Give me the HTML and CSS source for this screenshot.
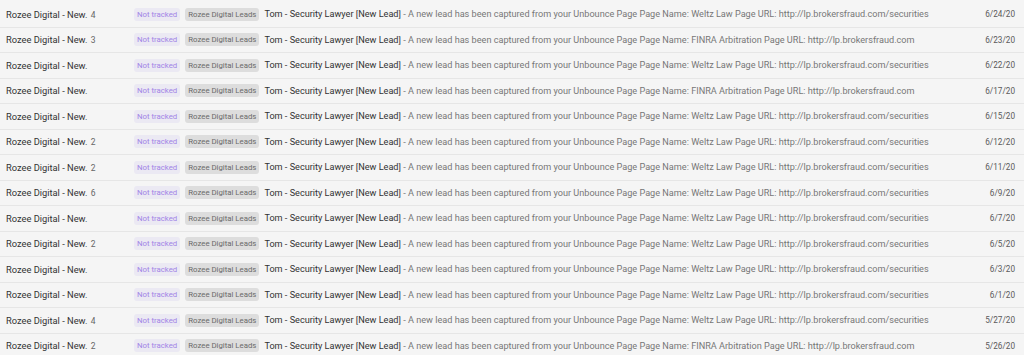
FILE: index.html
```html
<!DOCTYPE html>
<html lang="en">
<head>
    <meta charset="UTF-8">
    <title>Inbox</title>
    <link rel="stylesheet" href="styles.css">
</head>
<body>
    <div class="inbox">
        <div class="row"><div class="sender">Rozee Digital - New. <span class="count">4</span></div><span class="tag tag-track">Not tracked</span><span class="tag tag-label">Rozee Digital Leads</span><div class="text"><span class="subject">Tom - Security Lawyer [New Lead]</span><span class="snippet"> - A new lead has been captured from your Unbounce Page Page Name: Weltz Law Page URL: http://lp.brokersfraud.com/securities</span></div><div class="date">6/24/20</div></div>
        <div class="row"><div class="sender">Rozee Digital - New. <span class="count">3</span></div><span class="tag tag-track">Not tracked</span><span class="tag tag-label">Rozee Digital Leads</span><div class="text"><span class="subject">Tom - Security Lawyer [New Lead]</span><span class="snippet"> - A new lead has been captured from your Unbounce Page Page Name: FINRA Arbitration Page URL: http://lp.brokersfraud.com</span></div><div class="date">6/23/20</div></div>
        <div class="row"><div class="sender">Rozee Digital - New.</div><span class="tag tag-track">Not tracked</span><span class="tag tag-label">Rozee Digital Leads</span><div class="text"><span class="subject">Tom - Security Lawyer [New Lead]</span><span class="snippet"> - A new lead has been captured from your Unbounce Page Page Name: Weltz Law Page URL: http://lp.brokersfraud.com/securities</span></div><div class="date">6/22/20</div></div>
        <div class="row"><div class="sender">Rozee Digital - New.</div><span class="tag tag-track">Not tracked</span><span class="tag tag-label">Rozee Digital Leads</span><div class="text"><span class="subject">Tom - Security Lawyer [New Lead]</span><span class="snippet"> - A new lead has been captured from your Unbounce Page Page Name: FINRA Arbitration Page URL: http://lp.brokersfraud.com</span></div><div class="date">6/17/20</div></div>
        <div class="row"><div class="sender">Rozee Digital - New.</div><span class="tag tag-track">Not tracked</span><span class="tag tag-label">Rozee Digital Leads</span><div class="text"><span class="subject">Tom - Security Lawyer [New Lead]</span><span class="snippet"> - A new lead has been captured from your Unbounce Page Page Name: Weltz Law Page URL: http://lp.brokersfraud.com/securities</span></div><div class="date">6/15/20</div></div>
        <div class="row"><div class="sender">Rozee Digital - New. <span class="count">2</span></div><span class="tag tag-track">Not tracked</span><span class="tag tag-label">Rozee Digital Leads</span><div class="text"><span class="subject">Tom - Security Lawyer [New Lead]</span><span class="snippet"> - A new lead has been captured from your Unbounce Page Page Name: Weltz Law Page URL: http://lp.brokersfraud.com/securities</span></div><div class="date">6/12/20</div></div>
        <div class="row"><div class="sender">Rozee Digital - New. <span class="count">2</span></div><span class="tag tag-track">Not tracked</span><span class="tag tag-label">Rozee Digital Leads</span><div class="text"><span class="subject">Tom - Security Lawyer [New Lead]</span><span class="snippet"> - A new lead has been captured from your Unbounce Page Page Name: Weltz Law Page URL: http://lp.brokersfraud.com/securities</span></div><div class="date">6/11/20</div></div>
        <div class="row"><div class="sender">Rozee Digital - New. <span class="count">6</span></div><span class="tag tag-track">Not tracked</span><span class="tag tag-label">Rozee Digital Leads</span><div class="text"><span class="subject">Tom - Security Lawyer [New Lead]</span><span class="snippet"> - A new lead has been captured from your Unbounce Page Page Name: Weltz Law Page URL: http://lp.brokersfraud.com/securities</span></div><div class="date">6/9/20</div></div>
        <div class="row"><div class="sender">Rozee Digital - New.</div><span class="tag tag-track">Not tracked</span><span class="tag tag-label">Rozee Digital Leads</span><div class="text"><span class="subject">Tom - Security Lawyer [New Lead]</span><span class="snippet"> - A new lead has been captured from your Unbounce Page Page Name: Weltz Law Page URL: http://lp.brokersfraud.com/securities</span></div><div class="date">6/7/20</div></div>
        <div class="row"><div class="sender">Rozee Digital - New. <span class="count">2</span></div><span class="tag tag-track">Not tracked</span><span class="tag tag-label">Rozee Digital Leads</span><div class="text"><span class="subject">Tom - Security Lawyer [New Lead]</span><span class="snippet"> - A new lead has been captured from your Unbounce Page Page Name: Weltz Law Page URL: http://lp.brokersfraud.com/securities</span></div><div class="date">6/5/20</div></div>
        <div class="row"><div class="sender">Rozee Digital - New.</div><span class="tag tag-track">Not tracked</span><span class="tag tag-label">Rozee Digital Leads</span><div class="text"><span class="subject">Tom - Security Lawyer [New Lead]</span><span class="snippet"> - A new lead has been captured from your Unbounce Page Page Name: Weltz Law Page URL: http://lp.brokersfraud.com/securities</span></div><div class="date">6/3/20</div></div>
        <div class="row"><div class="sender">Rozee Digital - New.</div><span class="tag tag-track">Not tracked</span><span class="tag tag-label">Rozee Digital Leads</span><div class="text"><span class="subject">Tom - Security Lawyer [New Lead]</span><span class="snippet"> - A new lead has been captured from your Unbounce Page Page Name: Weltz Law Page URL: http://lp.brokersfraud.com/securities</span></div><div class="date">6/1/20</div></div>
        <div class="row"><div class="sender">Rozee Digital - New. <span class="count">4</span></div><span class="tag tag-track">Not tracked</span><span class="tag tag-label">Rozee Digital Leads</span><div class="text"><span class="subject">Tom - Security Lawyer [New Lead]</span><span class="snippet"> - A new lead has been captured from your Unbounce Page Page Name: Weltz Law Page URL: http://lp.brokersfraud.com/securities</span></div><div class="date">5/27/20</div></div>
        <div class="row"><div class="sender">Rozee Digital - New. <span class="count">2</span></div><span class="tag tag-track">Not tracked</span><span class="tag tag-label">Rozee Digital Leads</span><div class="text"><span class="subject">Tom - Security Lawyer [New Lead]</span><span class="snippet"> - A new lead has been captured from your Unbounce Page Page Name: FINRA Arbitration Page URL: http://lp.brokersfraud.com</span></div><div class="date">5/26/20</div></div>
    </div>
</body>
</html>
```

FILE: styles.css
```css
body {
    margin: 0;
    background-color: #f5f5f5;
    font-family: Roboto, Arial, sans-serif;
    font-size: 9.3px;
    color: #333;
    overflow: hidden;
}
.inbox {
    padding-top: 2px;
}
.row {
    display: flex;
    align-items: center;
    height: 25.5px;
    box-sizing: border-box;
    border-bottom: 1px solid #e6e6e6;
    padding: 0 9px 0 6px;
    white-space: nowrap;
}
.sender {
    width: 128px;
    flex-shrink: 0;
    color: #333;
}
.count {
    color: #666;
    font-size: 8.5px;
    margin-left: 1px;
}
.tag {
    font-size: 7.8px;
    line-height: 13px;
    padding: 0 3px;
    border-radius: 3px;
    margin-right: 5px;
    flex-shrink: 0;
}
.tag-track {
    background-color: #ebe9f3;
    color: #a184e6;
}
.tag-label {
    background-color: #dddddd;
    color: #6a6a6a;
}
.text {
    flex: 1;
    overflow: hidden;
    font-size: 9.15px;
}
.subject {
    color: #333;
}
.snippet {
    color: #777;
}
.date {
    color: #5a5a5a;
    font-size: 8.2px;
    margin-left: 10px;
}
```
